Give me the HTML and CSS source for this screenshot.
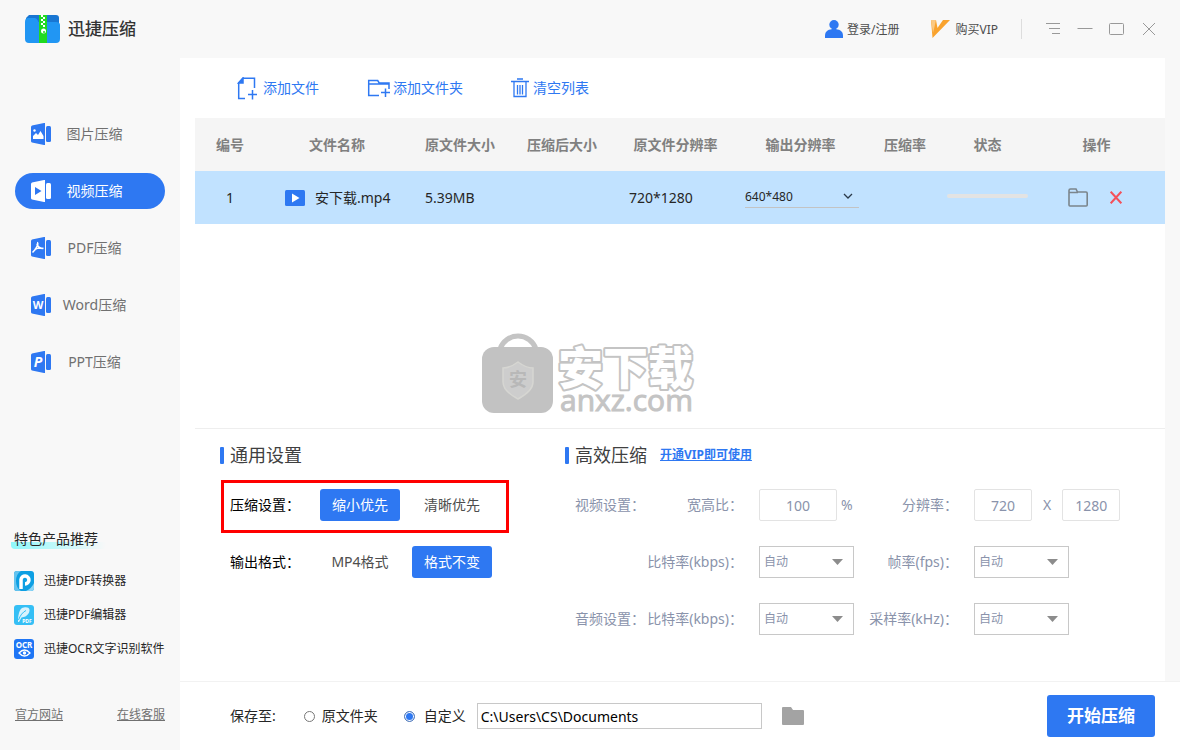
FILE: index.html
```html
<!DOCTYPE html>
<html lang="zh-CN">
<head>
<meta charset="utf-8">
<meta name="viewport" content="width=device-width, initial-scale=1">
<title>迅捷压缩</title>
<link rel="stylesheet" href="styles.css">
</head>
<body>
<div class="app">
  <header class="titlebar">
    <svg class="brand-logo" width="35" height="28" viewBox="0 0 35 28" aria-hidden="true">
      <path d="M4 0h27q3 0 3 3v6H1V3z" fill="#1976d2"/>
      <path d="M0 7q0-4 3-4h6.500q2.500 0 4 4H31q4 0 4 3v14q0 4-4 4H4q-4 0-4-4z" fill="#2196f3"/>
      <path d="M14 0h8v28h-8z" fill="#21d921"/>
      <path d="M16 0h2v2h-2zM18 2h2v2h-2zM16 4h2v2h-2zM18 6h2v2h-2zM16 8h2v2h-2zM18 10h2v2h-2z" fill="#fff"/>
      <circle cx="18.500" cy="16" r="2.500" fill="#fff"/><circle cx="19" cy="17" r="1" fill="#21d921"/>
    </svg>
    <h1 class="brand-name">迅捷压缩</h1>
    <button class="account login" type="button">
      <svg width="18" height="18" viewBox="0 0 18 18" aria-hidden="true"><g fill="#2e78f2"><circle cx="9" cy="4.700" r="4.700"/><path d="M0 18v-2.500C0 11 4 9 9 9s9 2 9 6.500V18z"/></g></svg>
      <span>登录/注册</span>
    </button>
    <button class="account vip" type="button">
      <svg width="19" height="18" viewBox="0 0 19 18" aria-hidden="true"><path d="M0 0h5l1.500 8L12 0h7L1.500 18z" fill="#f9a32e"/><path d="M0 0h5L3 9l-1 4z" fill="#fbc983"/></svg>
      <span>购买VIP</span>
    </button>
    <span class="bar-divider"></span>
    <div class="window-buttons">
      <button type="button" aria-label="菜单"><svg width="16" height="16" viewBox="0 0 16 16"><path d="M1 2.500h14M4 7.500h11M7 12.500h8"/></svg></button>
      <button type="button" aria-label="最小化"><svg width="16" height="16" viewBox="0 0 16 16"><path d="M.500 7.500h15"/></svg></button>
      <button type="button" aria-label="最大化"><svg width="16" height="16" viewBox="0 0 16 16"><rect x=".500" y="2.500" width="14" height="11" rx="1"/></svg></button>
      <button type="button" aria-label="关闭"><svg width="16" height="16" viewBox="0 0 16 16"><path d="M2 2l12 12M14 2L2 14"/></svg></button>
    </div>
  </header>

  <aside class="sidebar">
    <nav class="nav">
      <a class="nav-item" href="#image">
        <svg width="20" height="22" viewBox="0 0 20 22" aria-hidden="true"><path class="door" d="M0 4q0-1 1-1.500L13 0h1v22h-1L1 19.500Q0 19 0 18z"/><rect class="door" x="15" y="3" width="5" height="16" rx="1.500"/><path class="cut" d="M2 16V13l3-3 2 2 2.500-4 3 5v3z"/><circle class="cut" cx="3.500" cy="7.500" r="1.200"/></svg>
        <span>图片压缩</span></a>
      <a class="nav-item active" href="#video" aria-current="page">
        <svg width="20" height="22" viewBox="0 0 20 22" aria-hidden="true"><path class="door" d="M0 4q0-1 1-1.500L13 0h1v22h-1L1 19.500Q0 19 0 18z"/><rect class="door" x="15" y="3" width="5" height="16" rx="1.500"/><path class="cut" d="M4 7l6.500 4L4 15z"/></svg>
        <span>视频压缩</span></a>
      <a class="nav-item" href="#pdf">
        <svg width="20" height="22" viewBox="0 0 20 22" aria-hidden="true"><path class="door" d="M0 4q0-1 1-1.500L13 0h1v22h-1L1 19.500Q0 19 0 18z"/><rect class="door" x="15" y="3" width="5" height="16" rx="1.500"/><path class="line" d="M6 5.500c2 0 0 6-4.500 10M6 6.500c.500 3 2.500 5 6 5M3.500 12.500c3-1.500 6-2 9-1"/></svg>
        <span>PDF压缩</span></a>
      <a class="nav-item" href="#word">
        <svg width="20" height="22" viewBox="0 0 20 22" aria-hidden="true"><path class="door" d="M0 4q0-1 1-1.500L13 0h1v22h-1L1 19.500Q0 19 0 18z"/><rect class="door" x="15" y="3" width="5" height="16" rx="1.500"/><text class="cut letter" x="7" y="15" font-size="11">W</text></svg>
        <span>Word压缩</span></a>
      <a class="nav-item" href="#ppt">
        <svg width="20" height="22" viewBox="0 0 20 22" aria-hidden="true"><path class="door" d="M0 4q0-1 1-1.500L13 0h1v22h-1L1 19.500Q0 19 0 18z"/><rect class="door" x="15" y="3" width="5" height="16" rx="1.500"/><text class="cut letter slanted" x="7" y="16" font-size="14">P</text></svg>
        <span>PPT压缩</span></a>
    </nav>

    <section class="promo">
      <h2 class="promo-title">特色产品推荐</h2>
      <a class="promo-item" href="#converter">
        <svg width="20" height="20" viewBox="0 0 20 20" aria-hidden="true"><rect width="20" height="20" rx="3" fill="#0d9fe3"/><path d="M0 3q0-3 3-3h4Q2 3 2 10t5 10H3q-3 0-3-3z" fill="#65c3ee"/><path d="M20 12v5q0 3-3 3h-5q6-3 8-8z" fill="#8dd5f5"/><path d="M7 18V8.500a4 4 0 1 1 4 4.500" fill="none" stroke="#fff" stroke-width="3.500"/></svg>
        迅捷PDF转换器</a>
      <a class="promo-item" href="#editor">
        <svg width="20" height="20" viewBox="0 0 20 20" aria-hidden="true"><rect width="20" height="20" rx="3" fill="#35bff5"/><path d="M4 17Q4 3 10 2.500c6-1 6.500 3 4.500 6-2 3-4 3.500-7 4L5 17z" fill="#d9f3fd"/><path d="M4.500 15Q7 8 12 5.500" fill="none" stroke="#35bff5"/><text class="tag" x="13" y="18" font-size="5">PDF</text></svg>
        迅捷PDF编辑器</a>
      <a class="promo-item" href="#ocr">
        <svg width="20" height="20" viewBox="0 0 20 20" aria-hidden="true"><rect width="20" height="20" rx="3" fill="#1f76f5"/><text class="tag" x="10" y="8.500" font-size="8">OCR</text><path d="M5 14q5.500-6 11 0-5.500 6-11 0z" fill="none" stroke="#fff" stroke-width="1.300"/><circle cx="10.500" cy="14" r="1.700" fill="#fff"/></svg>
        迅捷OCR文字识别软件</a>
    </section>

    <div class="side-links"><a href="#site">官方网站</a><a href="#service">在线客服</a></div>
  </aside>

  <main class="panel">
    <div class="toolbar">
      <button class="tool" type="button">
        <svg width="23" height="23" viewBox="0 0 23 23" aria-hidden="true"><path d="M8 21.500H1.700V6L6 1.200h11.500V11M11 17.500h9M15.500 13v9.500"/><path d="M1.500 6H6V1z" fill="#2e78f2"/></svg>
        添加文件</button>
      <button class="tool" type="button">
        <svg width="23" height="19" viewBox="0 0 23 19" aria-hidden="true"><path d="M12 16.500H1.700V1.500h9l1.500 2.500H22v6M1.700 5H22M14 13.500h9M18.500 9.500v8.500"/></svg>
        添加文件夹</button>
      <button class="tool" type="button">
        <svg width="19" height="20" viewBox="0 0 19 20" aria-hidden="true"><path d="M0 3.500h18M6 1h6M3 4v14.500h12V4M6.500 7v9.500M9 7v9.500M11.500 7v9.500" stroke-width="1.300"/></svg>
        清空列表</button>
    </div>

    <div class="file-list">
      <table class="files">
        <colgroup><col class="c-no"><col class="c-name"><col class="c-size"><col class="c-size"><col class="c-res"><col class="c-res"><col class="c-rate"><col class="c-state"><col></colgroup>
        <thead><tr><th>编号</th><th>文件名称</th><th>原文件大小</th><th>压缩后大小</th><th>原文件分辨率</th><th>输出分辨率</th><th>压缩率</th><th>状态</th><th>操作</th></tr></thead>
        <tbody><tr>
          <td>1</td>
          <td><div class="file-name"><svg width="20" height="16" viewBox="0 0 20 16" aria-hidden="true"><rect width="20" height="16" rx="1.500" fill="#2e78f2"/><path d="M7 3.500l7.500 4.500L7 12.500z" fill="#fff"/></svg>安下载.mp4</div></td>
          <td class="start">5.39MB</td>
          <td></td>
          <td class="start">720*1280</td>
          <td><div class="size-pick"><select aria-label="输出分辨率"><option>640*480</option></select><svg width="10" height="7" viewBox="0 0 10 7" aria-hidden="true"><path d="M1 1l4 4 4-4" fill="none" stroke="#2b3a4a" stroke-width="1.300"/></svg></div></td>
          <td></td>
          <td><progress class="state" value="0" max="100" aria-label="状态"></progress></td>
          <td><div class="row-actions">
            <button type="button" aria-label="打开文件夹"><svg width="20" height="19" viewBox="0 0 20 19"><path d="M1 17V2.500Q1 1 2.500 1H8l1.500 3H18q1.200 0 1.200 1.200V17q0 1-1 1H2q-1 0-1-1zM1 4.500h9" fill="none" stroke="#7b858c" stroke-width="1.600"/></svg></button>
            <button type="button" aria-label="删除"><svg width="12" height="13" viewBox="0 0 12 13"><path d="M.700.700l10.600 11.600M11.300.700L.700 12.300" fill="none" stroke="#f4505a" stroke-width="2"/></svg></button>
          </div></td>
        </tr></tbody>
      </table>
    </div>

    <div class="settings">
      <section class="general">
        <h2 class="section-title">通用设置</h2>
        <div class="setting highlighted"><span class="setting-label">压缩设置：</span><button class="choice chosen" type="button">缩小优先</button><button class="choice" type="button">清晰优先</button></div>
        <div class="setting"><span class="setting-label">输出格式：</span><button class="choice" type="button">MP4格式</button><button class="choice chosen" type="button">格式不变</button></div>
      </section>
      <section class="advanced">
        <div class="advanced-head"><h2 class="section-title">高效压缩</h2><a class="vip-link" href="#vip">开通VIP即可使用</a></div>
        <div class="form">
          <span>视频设置：</span>
          <label for="ratio">宽高比：</label>
          <div class="field"><input class="ratio" id="ratio" type="text" value="100"><span>%</span></div>
          <label for="res-w">分辨率：</label>
          <div class="field dims"><input id="res-w" type="text" value="720"><span>X</span><input type="text" value="1280" aria-label="高度"></div>

          <span></span>
          <label for="vbit">比特率(kbps)：</label>
          <div class="combo"><select id="vbit"><option>自动</option></select><svg width="11" height="6" viewBox="0 0 11 6" aria-hidden="true"><path d="M0 0h11L5.500 6z"/></svg></div>
          <label for="fps">帧率(fps)：</label>
          <div class="combo"><select id="fps"><option>自动</option></select><svg width="11" height="6" viewBox="0 0 11 6" aria-hidden="true"><path d="M0 0h11L5.500 6z"/></svg></div>

          <span>音频设置：</span>
          <label for="abit">比特率(kbps)：</label>
          <div class="combo"><select id="abit"><option>自动</option></select><svg width="11" height="6" viewBox="0 0 11 6" aria-hidden="true"><path d="M0 0h11L5.500 6z"/></svg></div>
          <label for="khz">采样率(kHz)：</label>
          <div class="combo"><select id="khz"><option>自动</option></select><svg width="11" height="6" viewBox="0 0 11 6" aria-hidden="true"><path d="M0 0h11L5.500 6z"/></svg></div>
        </div>
      </section>
    </div>
  </main>

  <footer class="savebar">
    <span class="save-label">保存至:</span>
    <label class="radio"><input type="radio" name="dest">原文件夹</label>
    <label class="radio"><input type="radio" name="dest" checked>自定义</label>
    <input class="path" type="text" value="C:\Users\CS\Documents" aria-label="保存路径">
    <button class="browse" type="button" aria-label="浏览"><svg width="22" height="18" viewBox="0 0 22 18"><path d="M0 1q0-1 1-1h8l2 3h10q1 0 1 1v13q0 1-1 1H1q-1 0-1-1z" fill="#a3a3a3"/></svg></button>
    <button class="start-button" type="button">开始压缩</button>
  </footer>

  <div class="watermark" aria-hidden="true">
    <svg width="218" height="84" viewBox="0 0 218 84">
      <path d="M19 16a19 19 0 0 1 36 0" fill="none" stroke="#c4c4c4" stroke-width="5"/>
      <rect x="1" y="14" width="71" height="66" rx="12" fill="#c2c2c2"/>
      <path d="M37 29q8 6 15 6v14q0 9-15 17-15-8-15-17V35q7 0 15-6z" fill="#cdcdcd" stroke="#d6d6d2" stroke-width="1.500"/>
      <text class="mark-seal" x="37" y="53">安</text>
      <text class="mark-name" x="77" y="52">安下载</text>
      <text class="mark-site" x="79" y="78">anxz.com</text>
    </svg>
  </div>
</div>
</body>
</html>
```
FILE: styles.css
```css
* { box-sizing: border-box; }

body {
  margin: 0;
  background: #f8f8f8;
  color: #333;
  font: 14px/20px "Noto Sans", "Noto Sans CJK SC", sans-serif;
}

h1, h2 { margin: 0; font-weight: 400; }
a { color: inherit; text-decoration: none; }
svg { display: block; flex: none; }
button, input, select { margin: 0; font: inherit; color: inherit; }
button { padding: 0; border: 0; background: none; cursor: pointer; }
input[type="text"], select { padding: 0; border-radius: 0; background: #fff; outline: 0; }
select { appearance: none; }

.app {
  position: relative;
  display: grid;
  grid-template: 58px 1fr 69px / 180px 1fr;
  min-height: 100vh;
}

/* title bar */
.titlebar {
  grid-column: 1 / -1;
  display: flex;
  align-items: center;
  padding: 0 23px 0 25px;
}
.brand-name { margin-left: 8px; font-size: 17px; font-weight: 500; }
.account { display: flex; align-items: center; gap: 4px; font-size: 12px; color: #4d4d4d; }
.account span { padding-top: 2px; }
.login { margin-left: auto; }
.vip { gap: 5px; margin-left: 32px; }
.bar-divider { width: 1px; height: 20px; margin: 0 23px 0 23px; background: #ddd; }
.window-buttons { display: flex; gap: 16px; }
.window-buttons svg { fill: none; stroke: #999; }

/* sidebar */
.sidebar {
  grid-row: 2 / 4;
  display: flex;
  flex-direction: column;
  padding: 58px 15px 25px;
}
.nav { display: grid; gap: 21px; }
.nav-item {
  display: flex;
  align-items: center;
  height: 36px;
  padding: 0 27px 0 16px;
  border-radius: 18px;
  color: #707070;
}
.nav-item span { flex: 1; text-align: center; }
.nav-item.active { background: #2e78f2; color: #fff; }
.door { fill: #2e78f2; }
.cut { fill: #fff; }
.line { fill: none; stroke: #fff; stroke-width: 1.6px; }
.active .door { fill: #fff; }
.active .cut { fill: #2e78f2; }
.letter { font-weight: 700; text-anchor: middle; }
.slanted { font-style: italic; }
.tag { fill: #fff; font-weight: 700; text-anchor: middle; }

.promo { display: grid; gap: 14px; margin: auto -15px 46px -1px; color: #262626; }
.promo-title {
  justify-self: start;
  margin: 0 0 8px -3px;
  padding: 0 8px 0 3px;
  border-radius: 4px;
  background: linear-gradient(90deg, #8ff8fb, #f8f8f8) bottom / 100% 7px no-repeat;
  font-size: 14px;
}
.promo-item { display: flex; gap: 10px; font-size: 12px; white-space: nowrap; }
.side-links {
  display: flex;
  justify-content: space-between;
  font-size: 12px;
  color: #707070;
}
.side-links a { text-decoration: underline; }

/* work area */
.panel {
  display: flex;
  flex-direction: column;
  margin-right: 15px;
  padding-left: 15px;
  background: #fff;
}
.toolbar {
  display: flex;
  align-items: center;
  gap: 48px;
  height: 60px;
  padding-left: 42px;
  color: #2e78f2;
}
.tool { display: flex; align-items: center; gap: 3px; }
.tool svg { fill: none; stroke: #2e78f2; stroke-width: 1.5px; }

.file-list { flex: 1; }
.files { width: 100%; table-layout: fixed; border-collapse: collapse; text-align: center; }
.files th { height: 53px; padding: 0; background: #f5f5f5; color: #808080; font-weight: 600; }
.files td { height: 53px; padding: 0; background: #c1e2ff; color: #262626; }
.files .start { padding-left: 16px; text-align: left; }
.c-no { width: 70px; }
.c-name { width: 144px; }
.c-size { width: 102px; }
.c-res { width: 125px; }
.c-rate { width: 84px; }
.c-state { width: 81px; }
.file-name { display: flex; align-items: center; gap: 10px; padding-left: 20px; }
.size-pick { position: relative; margin: 0 4px 0 7px; border-bottom: 1px solid #c3c3c3; }
.size-pick select { display: block; width: 100%; border: 0; background: none; font-size: 12px; }
.size-pick svg { position: absolute; right: 6px; top: 6px; }
.state { display: block; appearance: none; width: 100%; height: 4px; margin-bottom: 4px; border: 0; border-radius: 2px; overflow: hidden; }
.state::-webkit-progress-bar { background: #e3e3e3; }
.row-actions { display: flex; justify-content: center; align-items: center; gap: 22px; padding-right: 4px; }

/* settings */
.settings {
  display: grid;
  grid-template-columns: 345px 1fr;
  padding: 16px 0 46px 25px;
  border-top: 1px solid #eee;
}
.section-title {
  display: flex;
  align-items: center;
  gap: 6px;
  font-size: 18px;
  color: #404040;
}
.section-title::before { content: ""; width: 4px; height: 17px; border-radius: 1px; background: #2e78f2; }
.setting { display: flex; align-items: center; gap: 12px; padding-left: 10px; color: #000; }
.setting-label { width: 78px; white-space: nowrap; }
.highlighted {
  width: 288px;
  margin: 15px 0 13px 1px;
  padding: 6px 0 9px 6px;
  border: 3px solid #f00;
}
.choice { width: 80px; height: 32px; border-radius: 3px; color: #4d4d4d; }
.choice.chosen { background: #2e78f2; color: #fff; }

.advanced-head { display: flex; align-items: center; gap: 13px; margin-bottom: 24px; }
.vip-link { color: #2e78f2; font-size: 12px; font-weight: 700; text-decoration: underline; }
.form {
  display: grid;
  grid-template-columns: 70px 114px 101px 114px 1fr;
  grid-auto-rows: 32px;
  align-items: center;
  gap: 25px 0;
  padding-left: 10px;
  color: #8a93ab;
  white-space: nowrap;
}
.form label { padding-right: 16px; text-align: right; }
.field { display: flex; align-items: center; gap: 4px; }
.dims { gap: 11px; }
.field input { width: 58px; height: 32px; border: 1px solid #e3e3e3; border-radius: 2px; text-align: center; }
.field .ratio { width: 78px; }
.combo { position: relative; width: 95px; }
.combo select { display: block; width: 100%; height: 32px; padding-left: 4px; border: 1px solid #c8c8c8; font-size: 12px; }
.combo svg { position: absolute; right: 11px; top: 13px; fill: #8c8c8c; }

/* save bar */
.savebar {
  display: flex;
  align-items: center;
  padding: 0 25px 0 50px;
  border-top: 1px solid #f2f2f2;
  background: #fff;
  color: #262626;
}
.save-label { margin-right: 28px; }
.radio { display: flex; align-items: center; gap: 7px; margin-right: 26px; }
.radio + .radio { gap: 9px; margin-right: 11px; }
.radio input { appearance: none; width: 11px; height: 11px; border: 1px solid #777; border-radius: 50%; background: #fff; }
.radio input:checked { border-color: #5a7fb8; background: #2e78f2; box-shadow: inset 0 0 0 1px #fff; }
.path { width: 285px; height: 26px; border: 1px solid #c8c8c8; color: #000; }
.savebar .path { padding-left: 3px; }
.browse { margin-left: 20px; }
.start-button {
  width: 108px;
  height: 42px;
  margin-left: auto;
  border-radius: 3px;
  background: #2e78f2;
  color: #fff;
  font-size: 17px;
  font-weight: 600;
}

/* centred mark over the window */
.watermark {
  position: absolute;
  inset: 0;
  display: grid;
  place-items: center;
  pointer-events: none;
}
.watermark svg { overflow: visible; }
.mark-seal { fill: #b8b8b8; font-size: 18px; font-weight: 700; text-anchor: middle; }
.mark-name {
  fill: #fff;
  stroke: #c4c4c4;
  stroke-width: 4px;
  stroke-linejoin: round;
  paint-order: stroke;
  font-size: 45px;
  font-weight: 900;
}
.mark-site { fill: #c4c4c4; stroke: #c4c4c4; font: 30px "Open Sans", sans-serif; }
```
